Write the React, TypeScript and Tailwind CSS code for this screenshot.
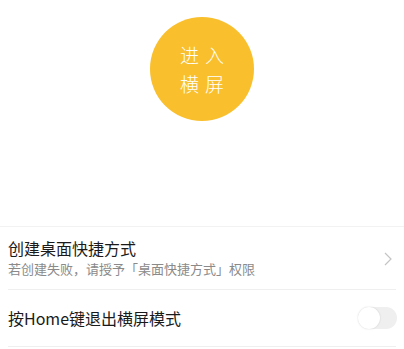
export default function App() {
  return (
    <div
      className="w-[404px] h-[349px] bg-white overflow-hidden"
      style={{ fontFamily: '"Noto Sans CJK SC", "Noto Sans", sans-serif' }}
    >
      <div className="h-[226px] flex justify-center pt-[17px]">
        <div className="w-[104px] h-[104px] rounded-full bg-[#f9bf2c] flex flex-col items-center justify-center text-white text-[19px] font-light leading-[29px] tracking-[6px] pl-[6px]">
          <span>进入</span>
          <span>横屏</span>
        </div>
      </div>
      <div className="border-t border-[#f2f2f2]">
        <div className="mx-[8px] h-[63px] flex items-center justify-between border-b border-[#efefef]">
          <div className="flex flex-col -mt-[2px]">
            <span className="text-[16px] leading-[22px] text-[#1a1a1a]">创建桌面快捷方式</span>
            <span className="text-[13px] leading-[19px] text-[#8a8a8a]">若创建失败，请授予「桌面快捷方式」权限</span>
          </div>
          <svg width="8" height="14" viewBox="0 0 8 14" className="mr-[4px] mt-[2px]">
            <path d="M1 1 L7 7 L1 13" fill="none" stroke="#c4c4c4" strokeWidth="1.2" />
          </svg>
        </div>
        <div className="mx-[8px] h-[57px] flex items-center justify-between border-b border-[#efefef]">
          <span className="text-[16px] leading-[22px] text-[#1a1a1a]">按Home键退出横屏模式</span>
          <div className="w-[39px] h-[22px] rounded-full bg-[#efefef] relative mr-[-1px]">
            <div className="absolute left-0 top-0 w-[22px] h-[22px] rounded-full bg-white shadow-[0_0_2px_rgba(0,0,0,0.15)]" />
          </div>
        </div>
      </div>
    </div>
  );
}
